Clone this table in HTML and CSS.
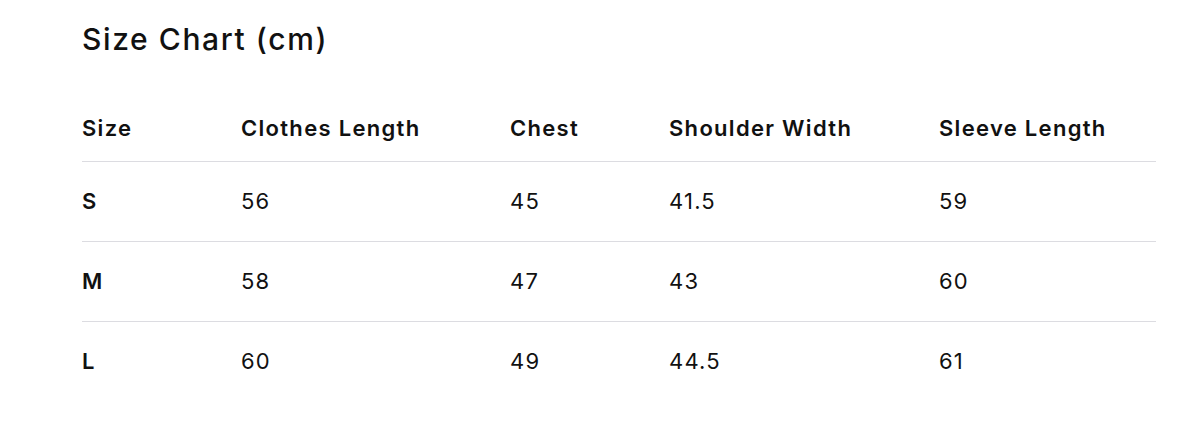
FILE: index.html
```html
<!DOCTYPE html>
<html>
<head>
<meta charset="utf-8">
<link rel="stylesheet" href="styles.css">
</head>
<body>
<div class="page">
  <h1 class="title">Size Chart (cm)</h1>
  <table class="chart">
    <colgroup>
      <col class="c1"><col class="c2"><col class="c3"><col class="c4"><col class="c5">
    </colgroup>
    <thead>
      <tr><th>Size</th><th>Clothes Length</th><th>Chest</th><th>Shoulder Width</th><th>Sleeve Length</th></tr>
    </thead>
    <tbody>
      <tr><th>S</th><td>56</td><td>45</td><td>41.5</td><td>59</td></tr>
      <tr><th>M</th><td>58</td><td>47</td><td>43</td><td>60</td></tr>
      <tr><th>L</th><td>60</td><td>49</td><td>44.5</td><td>61</td></tr>
    </tbody>
  </table>
</div>
</body>
</html>
```
FILE: styles.css
```css
* { box-sizing: border-box; }
html, body { margin: 0; padding: 0; background: #fff; }
body { font-family: "Inter", "Open Sans", sans-serif; color: #111; }
.page { padding: 21px 44px 0 82px; }
.title { margin: 0; font-size: 30px; line-height: 36px; font-weight: 500; letter-spacing: 1.6px; }
.chart { width: 1074px; border-collapse: collapse; table-layout: fixed; margin-top: 38px; }
.c1 { width: 159px; } .c2 { width: 269px; } .c3 { width: 159px; } .c4 { width: 270px; } .c5 { width: 217px; }
.chart th, .chart td { text-align: left; padding: 0; font-size: 22px; letter-spacing: 1.2px; vertical-align: middle; }
.chart thead th { height: 66px; font-weight: 600; letter-spacing: 1.3px; border-bottom: 1px solid #dcdce1; }
.chart tbody th { font-weight: 600; }
.chart tbody td { font-weight: 400; }
.chart tbody tr { height: 80px; }
.chart tbody tr + tr { border-top: 1px solid #dcdce1; }
```
